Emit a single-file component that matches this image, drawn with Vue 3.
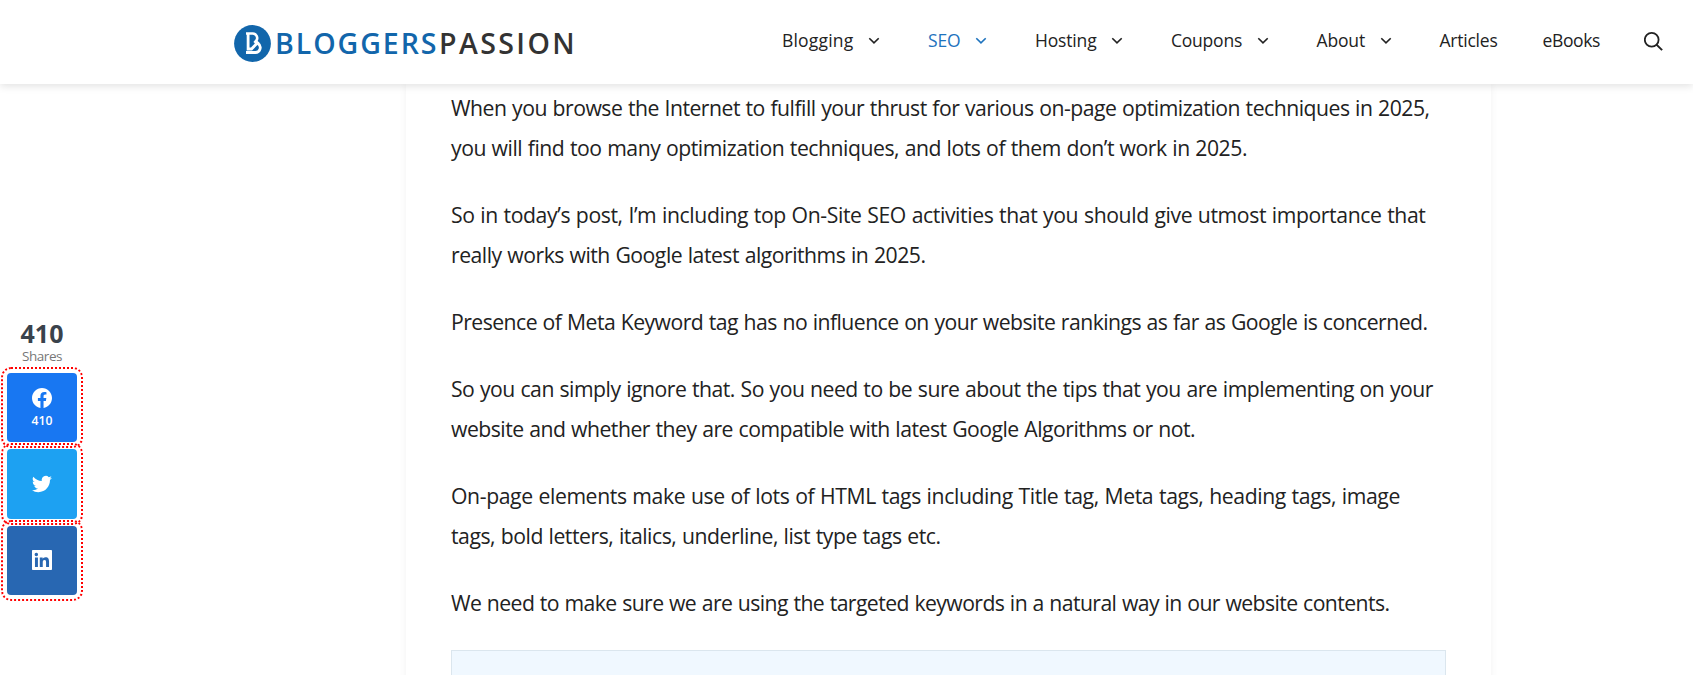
<script setup>
const menu = [
  { label: 'Blogging', width: 71.5, sub: true },
  { label: 'SEO', width: 32.5, sub: true, active: true },
  { label: 'Hosting', width: 61.5, sub: true },
  { label: 'Coupons', width: 71, sub: true },
  { label: 'About', width: 48.5, sub: true },
  { label: 'Articles', width: 58 },
  { label: 'eBooks', width: 57.5 },
]

const paragraphs = [
  [
    { text: 'When you browse the Internet to fulfill your thrust for various on-page optimization techniques in 2025,', width: 978.5 },
    { text: 'you will find too many optimization techniques, and lots of them don’t work in 2025.', width: 796 },
  ],
  [
    { text: 'So in today’s post, I’m including top On-Site SEO activities that you should give utmost importance that', width: 974.5 },
    { text: 'really works with Google latest algorithms in 2025.', width: 474.5 },
  ],
  [{ text: 'Presence of Meta Keyword tag has no influence on your website rankings as far as Google is concerned.', width: 976.5 }],
  [
    { text: 'So you can simply ignore that. So you need to be sure about the tips that you are implementing on your', width: 982 },
    { text: 'website and whether they are compatible with latest Google Algorithms or not.', width: 744 },
  ],
  [
    { text: 'On-page elements make use of lots of HTML tags including Title tag, Meta tags, heading tags, image', width: 949 },
    { text: 'tags, bold letters, italics, underline, list type tags etc.', width: 489.5 },
  ],
  [{ text: 'We need to make sure we are using the targeted keywords in a natural way in our website contents.', width: 938.5 }],
]

// Tracks the text so that it sets to the given measure.
const vFit = {
  mounted(el, { value }) {
    const natural = el.getBoundingClientRect().width
    el.style.letterSpacing = `${(value - natural) / el.textContent.length}px`
  },
}
</script>

<template>
  <div class="page">
    <header class="site-header">
      <a class="logo">
        <svg class="mark" viewBox="0 0 37 37" width="37" height="37">
          <circle cx="18.5" cy="18.5" r="18.4" fill="#1266ab" />
          <g fill="none" stroke="#fff">
            <path d="M12 8.5H18.8a4.5 4.5 0 0 1 3.8 6.7L20.4 17.8" stroke-width="2.6" />
            <path d="M14.1 8.3V24H17.5L24.5 16.8" stroke-width="2.8" />
            <path d="M12 27.5H21.2a4.9 4.9 0 0 0 2.8-9L21 17.8" stroke-width="2.8" />
          </g>
        </svg>
        <span class="word blue"><span v-fit="163.5">BLOGGERS</span></span>
        <span class="word dark"><span v-fit="138">PASSION</span></span>
      </a>
      <nav class="menu">
        <a v-for="m in menu" :key="m.label" class="item" :class="{ active: m.active }">
          <span v-fit="m.width">{{ m.label }}</span>
          <svg v-if="m.sub" class="chev" viewBox="0 0 12 8" width="12" height="8">
            <path d="M1.3 1.3L6 5.9L10.7 1.3" fill="none" stroke="currentColor" stroke-width="1.6" />
          </svg>
        </a>
        <svg class="search" viewBox="0 0 19 19" width="19" height="19">
          <circle cx="7.7" cy="7.8" r="6.9" fill="none" stroke="#222" stroke-width="1.8" />
          <path d="M12.5 12.6L18.1 18.1" stroke="#222" stroke-width="2" />
        </svg>
      </nav>
    </header>

    <main class="article">
      <p v-for="(p, i) in paragraphs" :key="i">
        <span v-for="line in p" :key="line.text" class="line"><span v-fit="line.width">{{ line.text }}</span></span>
      </p>
      <div class="callout"></div>
    </main>

    <aside class="share">
      <div class="total">410</div>
      <div class="caption"><span v-fit="40">Shares</span></div>
      <a class="btn facebook">
        <svg viewBox="0 0 24 24" width="20" height="20">
          <path fill="#fff" d="M24 12.07C24 5.4 18.63 0 12 0S0 5.4 0 12.07C0 18.1 4.39 23.1 10.13 24v-8.44H7.08v-3.49h3.05V9.41c0-3.02 1.79-4.69 4.53-4.69 1.31 0 2.68.24 2.68.24v2.97h-1.51c-1.49 0-1.96.93-1.96 1.89v2.25h3.33l-.53 3.49h-2.8V24C19.61 23.1 24 18.1 24 12.07z" />
        </svg>
        <span class="count">410</span>
      </a>
      <a class="btn twitter">
        <svg viewBox="0 0 24 24" width="20" height="20">
          <path fill="#fff" d="M23.95 4.57a10 10 0 0 1-2.82.77 4.96 4.96 0 0 0 2.16-2.72c-.95.55-2 .95-3.13 1.18a4.92 4.92 0 0 0-8.38 4.48C7.69 8.1 4.07 6.13 1.64 3.16a4.92 4.92 0 0 0 1.52 6.57 4.9 4.9 0 0 1-2.23-.61v.06a4.92 4.92 0 0 0 3.95 4.83 5 5 0 0 1-2.21.08 4.94 4.94 0 0 0 4.6 3.42A9.87 9.87 0 0 1 0 19.54a14 14 0 0 0 7.55 2.21c9.05 0 14-7.5 14-13.98 0-.21 0-.42-.02-.63a9.94 9.94 0 0 0 2.42-2.57z" />
        </svg>
      </a>
      <a class="btn linkedin">
        <svg viewBox="0 0 24 24" width="20" height="20">
          <path fill="#fff" fill-rule="evenodd" d="M1.2 0H22.8C23.5 0 24 .5 24 1.2V22.8C24 23.5 23.5 24 22.8 24H1.2C.5 24 0 23.5 0 22.8V1.2C0 .5.5 0 1.2 0zM3.56 9H7.12V20.45H3.56zM5.34 3.3a2.07 2.07 0 1 0 0 4.13 2.07 2.07 0 0 0 0-4.13zM9.35 9V20.45H12.9V14.8c0-1.5.28-2.93 2.13-2.93 1.82 0 1.85 1.7 1.85 3.03v5.55h3.57v-6.28c0-3.08-.67-5.45-4.27-5.45-1.73 0-2.9.95-3.37 1.85h-.05V9z" />
        </svg>
      </a>
    </aside>
  </div>
</template>

<style>
body { overflow: hidden; background: #fff; }
</style>

<style scoped>
.page {
  position: relative;
  height: 675px;
  overflow: hidden;
  font-family: "Open Sans", "Noto Sans", sans-serif;
  font-variant-ligatures: none;
  color: #222;
}
.site-header {
  position: relative;
  z-index: 2;
  box-sizing: border-box;
  height: 84px;
  padding: 0 30px 0 234px;
  display: flex;
  justify-content: space-between;
  align-items: flex-start;
  background: #fff;
  box-shadow: 0 2px 8px rgba(0, 0, 0, 0.12);
}
.logo { display: flex; padding-top: 24.5px; }
.word {
  font-size: 28.5px;
  font-weight: 600;
  line-height: 37px;
  white-space: nowrap;
}
.blue { width: 164px; margin-left: 4px; color: #1266ab; }
.dark { color: #333; }
.menu { display: flex; align-items: center; height: 82px; }
.item {
  display: flex;
  align-items: center;
  margin-right: 45px;
  font-size: 17.5px;
  line-height: 24px;
  white-space: nowrap;
}
.item:last-of-type { margin-right: 44px; }
.item > span { margin-top: -1px; margin-bottom: 1px; }
.item.active { color: #1e73be; }
.chev { margin: 0 3px 0 14.5px; }
.article {
  box-sizing: border-box;
  width: 1085px;
  height: 620px;
  margin-left: 406px;
  padding: 4.4px 45px 0 45px;
  background: #fff;
  box-shadow: 0 0 8px rgba(0, 0, 0, 0.055);
}
.article p {
  margin: 0 0 27.7px;
  font-size: 21.2px;
  line-height: 39.6px;
  word-spacing: 0.6px;
}
.line { display: block; white-space: nowrap; }
.callout {
  height: 80px;
  border: 1px solid #dbe6ee;
  background: #f0f8ff;
}
.share {
  position: absolute;
  left: 7px;
  top: 318px;
  width: 70px;
  text-align: center;
}
.total { height: 30px; font-size: 25px; line-height: 30px; font-weight: 700; color: #3a424c; }
.caption { height: 25px; font-size: 13.5px; line-height: 16px; color: #777; }
.btn {
  display: flex;
  flex-direction: column;
  align-items: center;
  justify-content: center;
  height: 69.4px;
  margin-bottom: 7px;
  border-radius: 4px;
  outline: 2px dotted #f00;
  outline-offset: 4px;
}
.facebook { box-sizing: border-box; padding-top: 3px; background: #1877f2; }
.twitter { background: #1da1f2; }
.linkedin { background: #2867b2; }
.count { margin-top: 4px; font-size: 12.2px; line-height: 18px; font-weight: 600; color: #fff; }
</style>
